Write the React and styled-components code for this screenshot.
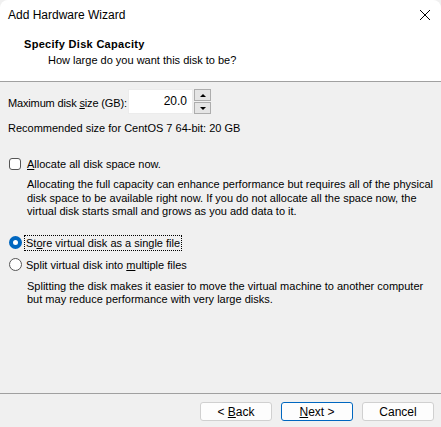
import React from 'react';
import styled, { createGlobalStyle } from 'styled-components';

const Global = createGlobalStyle`
html, body {
  margin: 0;
  padding: 0;
  background: #f0f0f0;
}
body {
  font-family: "Liberation Sans", Arial, sans-serif;
  font-size: 11px;
  color: #000;
}
`

const Window = styled.div`
width: 441px;
height: 427px;
display: flex;
flex-direction: column;
background: #f0f0f0;
border-radius: 8px 8px 0 0;
overflow: hidden;
`

const TitleBar = styled.div`
height: 30px;
display: flex;
align-items: center;
justify-content: space-between;
padding: 0 10px 0 8px;
background: #fff;
font-size: 12px;
`

const Close = styled.span`
width: 12px;
height: 12px;
display: flex;
`

const Header = styled.div`
height: 52px;
background: #fff;
border-bottom: 1px solid #a0a0a0;
padding: 7px 0 0 24px;
box-sizing: border-box;
`

const HeaderTitle = styled.div`
font-weight: bold;
line-height: 14px;
letter-spacing: 0.3px;
`

const HeaderSub = styled.div`
padding-left: 24px;
margin-top: 2px;
line-height: 14px;
`

const Body = styled.div`
flex: 1;
padding: 7px 8px 0 8px;
display: flex;
flex-direction: column;
`

const Row = styled.div`
display: flex;
align-items: center;
margin-top: ${p => p.top || 0}px;
`

const FieldLabel = styled.span`
width: 120px;
flex: none;
white-space: nowrap;
letter-spacing: -0.15px;
padding-top: 3px;
`

const Spin = styled.div`
display: flex;
align-items: center;
gap: 1px;
`

const Field = styled.div`
width: 65px;
height: 25px;
background: #fff;
border: 1px solid #ececec;
box-sizing: border-box;
text-align: right;
padding: 0 5px;
font-size: 12px;
line-height: 23px;
`

const Arrows = styled.div`
display: flex;
flex-direction: column;
gap: 1px;
`

const Arrow = styled.div`
width: 17px;
height: 12px;
box-sizing: border-box;
border: 1px solid #adadad;
background: #e5e5e5;
display: flex;
align-items: center;
justify-content: center;
&::after {
  content: "";
  border-left: 3px solid transparent;
  border-right: 3px solid transparent;
  ${p => p.down ? 'border-top: 3px solid #000;' : 'border-bottom: 3px solid #000;'}
}
`

const Text = styled.div`
line-height: 14px;
margin-top: ${p => p.top || 0}px;
`

const Box = styled.span`
width: 12px;
height: 12px;
box-sizing: border-box;
border: 1px solid #555;
border-radius: 3px;
background: #fff;
margin: 0 5px 0 1px;
flex: none;
`

const Radio = styled.span`
width: 13px;
height: 13px;
box-sizing: border-box;
border-radius: 50%;
flex: none;
margin: 0 3px 0 1px;
${p => p.on
  ? 'background: #fff; border: 4px solid #0067c0;'
  : 'background: #fff; border: 1px solid #555;'}
`

const Label = styled.span`
line-height: 14px;
padding: 0 1px;
outline: ${p => p.focus ? '1px dotted #000' : 'none'};
`

const Desc = styled.div`
padding-left: 19px;
line-height: 13.5px;
margin-top: ${p => p.top || 0}px;
`

const Footer = styled.div`
height: 34px;
box-sizing: border-box;
border-top: 1px solid #a0a0a0;
display: flex;
justify-content: flex-end;
align-items: flex-start;
gap: 9px;
padding: 8px 7px 0 0;
`

const Button = styled.button`
width: 72px;
height: 19px;
box-sizing: border-box;
border: 1px solid ${p => p.primary ? '#0067c0' : '#d0d0d0'};
border-radius: 3px;
background: #fdfdfd;
font-family: inherit;
font-size: 12px;
color: #000;
padding: 0;
`

const U = styled.u`
text-underline-offset: 1px;
`

export default function App() {
  return (
    <Window>
      <Global />
      <TitleBar>
        <span>Add Hardware Wizard</span>
        <Close>
          <svg width="12" height="12" viewBox="0 0 12 12">
            <path d="M1 1L11 11M11 1L1 11" stroke="#000" strokeWidth="1" />
          </svg>
        </Close>
      </TitleBar>
      <Header>
        <HeaderTitle>Specify Disk Capacity</HeaderTitle>
        <HeaderSub>How large do you want this disk to be?</HeaderSub>
      </Header>
      <Body>
        <Row>
          <FieldLabel>Maximum disk <U>s</U>ize (GB):</FieldLabel>
          <Spin>
            <Field>20.0</Field>
            <Arrows>
              <Arrow />
              <Arrow down />
            </Arrows>
          </Spin>
        </Row>
        <Text top={7}>Recommended size for CentOS 7 64-bit: 20 GB</Text>
        <Row top={22}>
          <Box />
          <Label><U>A</U>llocate all disk space now.</Label>
        </Row>
        <Desc top={7}>
          Allocating the full capacity can enhance performance but requires all of the physical
          disk space to be available right now. If you do not allocate all the space now, the
          virtual disk starts small and grows as you add data to it.
        </Desc>
        <Row top={17}>
          <Radio on />
          <Label focus>St<U>o</U>re virtual disk as a single file</Label>
        </Row>
        <Row top={8}>
          <Radio />
          <Label>Split virtual disk into <U>m</U>ultiple files</Label>
        </Row>
        <Desc top={8}>
          Splitting the disk makes it easier to move the virtual machine to another computer
          but may reduce performance with very large disks.
        </Desc>
      </Body>
      <Footer>
        <Button>&lt; <U>B</U>ack</Button>
        <Button primary><U>N</U>ext &gt;</Button>
        <Button>Cancel</Button>
      </Footer>
    </Window>
  );
}
